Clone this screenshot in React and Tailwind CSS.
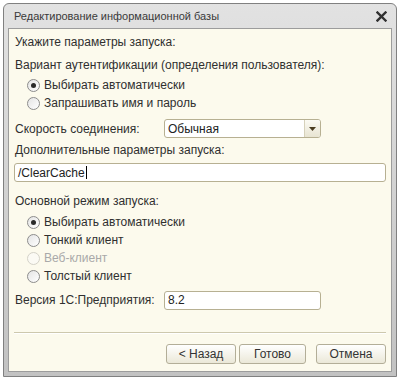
import React from 'react';

const Radio = ({ checked, disabled, label }) => (
  <div className="h-[18px] flex items-center pl-[13px]">
    <span
      className={
        'w-[13px] h-[13px] rounded-full border flex items-center justify-center shrink-0 ' +
        (disabled
          ? 'border-[#d4d2c8] bg-[#fbfaf4]'
          : 'border-[#8c8c8c] bg-gradient-to-br from-[#e4e4e4] to-white')
      }
    >
      {checked && <span className="w-[5px] h-[5px] rounded-full bg-[#2a2a2a]" />}
    </span>
    <span className={'ml-[4px] ' + (disabled ? 'text-[#a9a9a9]' : 'text-[#2f2f2f]')}>{label}</span>
  </div>
);

const Button = ({ children, className = '' }) => (
  <button
    className={
      'h-[20px] rounded-[3px] border border-[#b3ae98] bg-gradient-to-b from-white to-[#ebe8d8] text-[#333] text-[12px] leading-none ' +
      className
    }
  >
    {children}
  </button>
);

export default function App() {
  return (
    <div className="w-[400px] h-[379px] bg-white pt-[3px] pl-[3px] font-['Liberation_Sans',Arial,sans-serif] text-[12px] text-[#2f2f2f]">
      <div className="w-[394px] h-[374px] rounded-t-[6px] border border-[#808080] bg-gradient-to-b from-[#e2e2e2] to-[#c2c2c2] flex flex-col">
        {/* title bar */}
        <div className="h-[24px] shrink-0 flex items-center justify-between pl-[10px] pr-[9px]">
          <span className="text-[11px] text-[#3a3a3a]">Редактирование информационной базы</span>
          <svg width="11" height="11" viewBox="0 0 11 11">
            <path d="M1.5 1.5 L9.5 9.5 M9.5 1.5 L1.5 9.5" stroke="#303030" strokeWidth="2.4" strokeLinecap="square" />
          </svg>
        </div>

        {/* content */}
        <div className="flex-1 ml-[4px] mr-[4px] mb-[4px] border border-[#9c9c9c] bg-[#fcfaed] pl-[5px] pr-[4px] pt-[4px] flex flex-col">
          <div className="h-[18px] flex items-center pl-[1px]">Укажите параметры запуска:</div>
          <div className="h-[18px] flex items-center pl-[1px] mt-[5px]">Вариант аутентификации (определения пользователя):</div>
          <div className="mt-[2px]">
            <Radio checked label="Выбирать автоматически" />
            <Radio label="Запрашивать имя и пароль" />
          </div>

          <div className="h-[19px] flex items-center mt-[7px]">
            <span className="w-[150px] pl-[1px]">Скорость соединения:</span>
            <div className="w-[157px] h-[19px] flex rounded-[3px] border border-[#b7b092] bg-white overflow-hidden">
              <span className="flex-1 flex items-center pl-[3px] text-[#222]">Обычная</span>
              <span className="w-[16px] flex items-center justify-center border-l border-[#d6d1bb] bg-gradient-to-b from-[#fbfaf3] to-[#e8e4d2]">
                <svg width="7" height="4" viewBox="0 0 7 4">
                  <path d="M0 0 H7 L3.5 4 Z" fill="#4a3c20" />
                </svg>
              </span>
            </div>
          </div>

          <div className="h-[18px] flex items-center pl-[1px] mt-[3px]">Дополнительные параметры запуска:</div>
          <div className="w-[372px] h-[19px] mt-[4px] rounded-[3px] border border-[#b7b092] bg-white flex items-center pl-[3px] text-[#222]">
            /ClearCache<span className="w-px h-[13px] bg-black ml-px" />
          </div>

          <div className="h-[18px] flex items-center pl-[1px] mt-[10px]">Основной режим запуска:</div>
          <div className="mt-[3px]">
            <Radio checked label="Выбирать автоматически" />
            <Radio label="Тонкий клиент" />
            <Radio disabled label="Веб-клиент" />
            <Radio label="Толстый клиент" />
          </div>

          <div className="h-[18px] flex items-center mt-[6px]">
            <span className="w-[150px] pl-[1px]">Версия 1С:Предприятия:</span>
            <div className="w-[157px] h-[19px] rounded-[3px] border border-[#b7b092] bg-white flex items-center pl-[3px] text-[#222]">
              8.2
            </div>
          </div>

          <div className="w-[372px] mt-[23px] border-t border-[#cdc8ad] border-b border-b-white" />

          <div className="flex mt-[10px]">
            <Button className="w-[70px] ml-[152px]">&lt; Назад</Button>
            <Button className="w-[67px] ml-[3px] border-[#a59f82]">Готово</Button>
            <Button className="w-[70px] ml-[10px]">Отмена</Button>
          </div>
        </div>
      </div>
    </div>
  );
}
